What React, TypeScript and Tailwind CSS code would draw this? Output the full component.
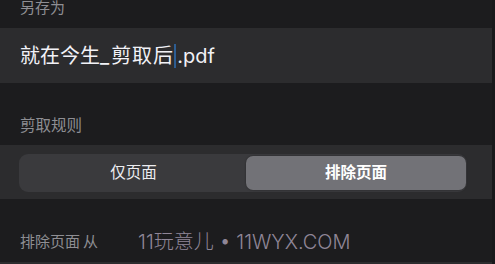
import React from "react";

const font = { fontFamily: '"Inter", "Noto Sans CJK SC", sans-serif' };

export default function App() {
  return (
    <div className="w-[495px] h-[264px] bg-[#19191b] overflow-hidden flex" style={font}>
      <div className="w-[492px] flex flex-col bg-[#1c1c1e]">
        <div className="h-[28px] px-[20px]">
          <div className="text-[15px] leading-[16px] text-[#8e8e93]">另存为</div>
        </div>
        <div className="h-[55px] bg-[#2c2c2e] px-[20px] flex items-center">
          <span className="text-[20px] leading-[24px] text-[#f2f2f7] flex items-center">
            <span>就在今生</span>
            <span className="tracking-[2px]">_</span>
            <span className="tracking-[1px]">剪取后</span>
            <span className="inline-block w-[2px] h-[24px] bg-[#2d5d92]"></span>
            <span className="ml-[1px]">.pdf</span>
          </span>
        </div>
        <div className="h-[62px] px-[20px] flex items-end pb-[11px]">
          <div className="text-[15.5px] leading-[16px] text-[#8e8e93]">剪取规则</div>
        </div>
        <div className="h-[54px] bg-[#2c2c2e] px-[19px] pt-[9px]">
          <div className="w-[448px] h-[38px] rounded-[9px] bg-[#3a3a3d] flex p-[2px] pr-[1px]">
            <div className="flex-1 flex items-center justify-center text-[15.5px] text-[#ececf0]">仅页面</div>
            <div className="w-[220px] rounded-[7px] bg-[#727277] flex items-center justify-center text-[15.5px] font-semibold text-white shadow-[0_0_2px_rgba(0,0,0,0.4)]">
              排除页面
            </div>
          </div>
        </div>
        <div className="h-[63px] px-[20px] flex items-center pt-[23px]">
          <span className="text-[15px] leading-[16px] text-[#8e8e93]">排除页面<span className="ml-[3px]">从</span></span>
          <span className="ml-[40px] text-[20px] leading-[20px] font-light text-[#8f8697]">11玩意儿 • 11WYX.COM</span>
        </div>
        <div className="h-[2px] bg-[#2c2c2e]"></div>
      </div>
    </div>
  );
}
